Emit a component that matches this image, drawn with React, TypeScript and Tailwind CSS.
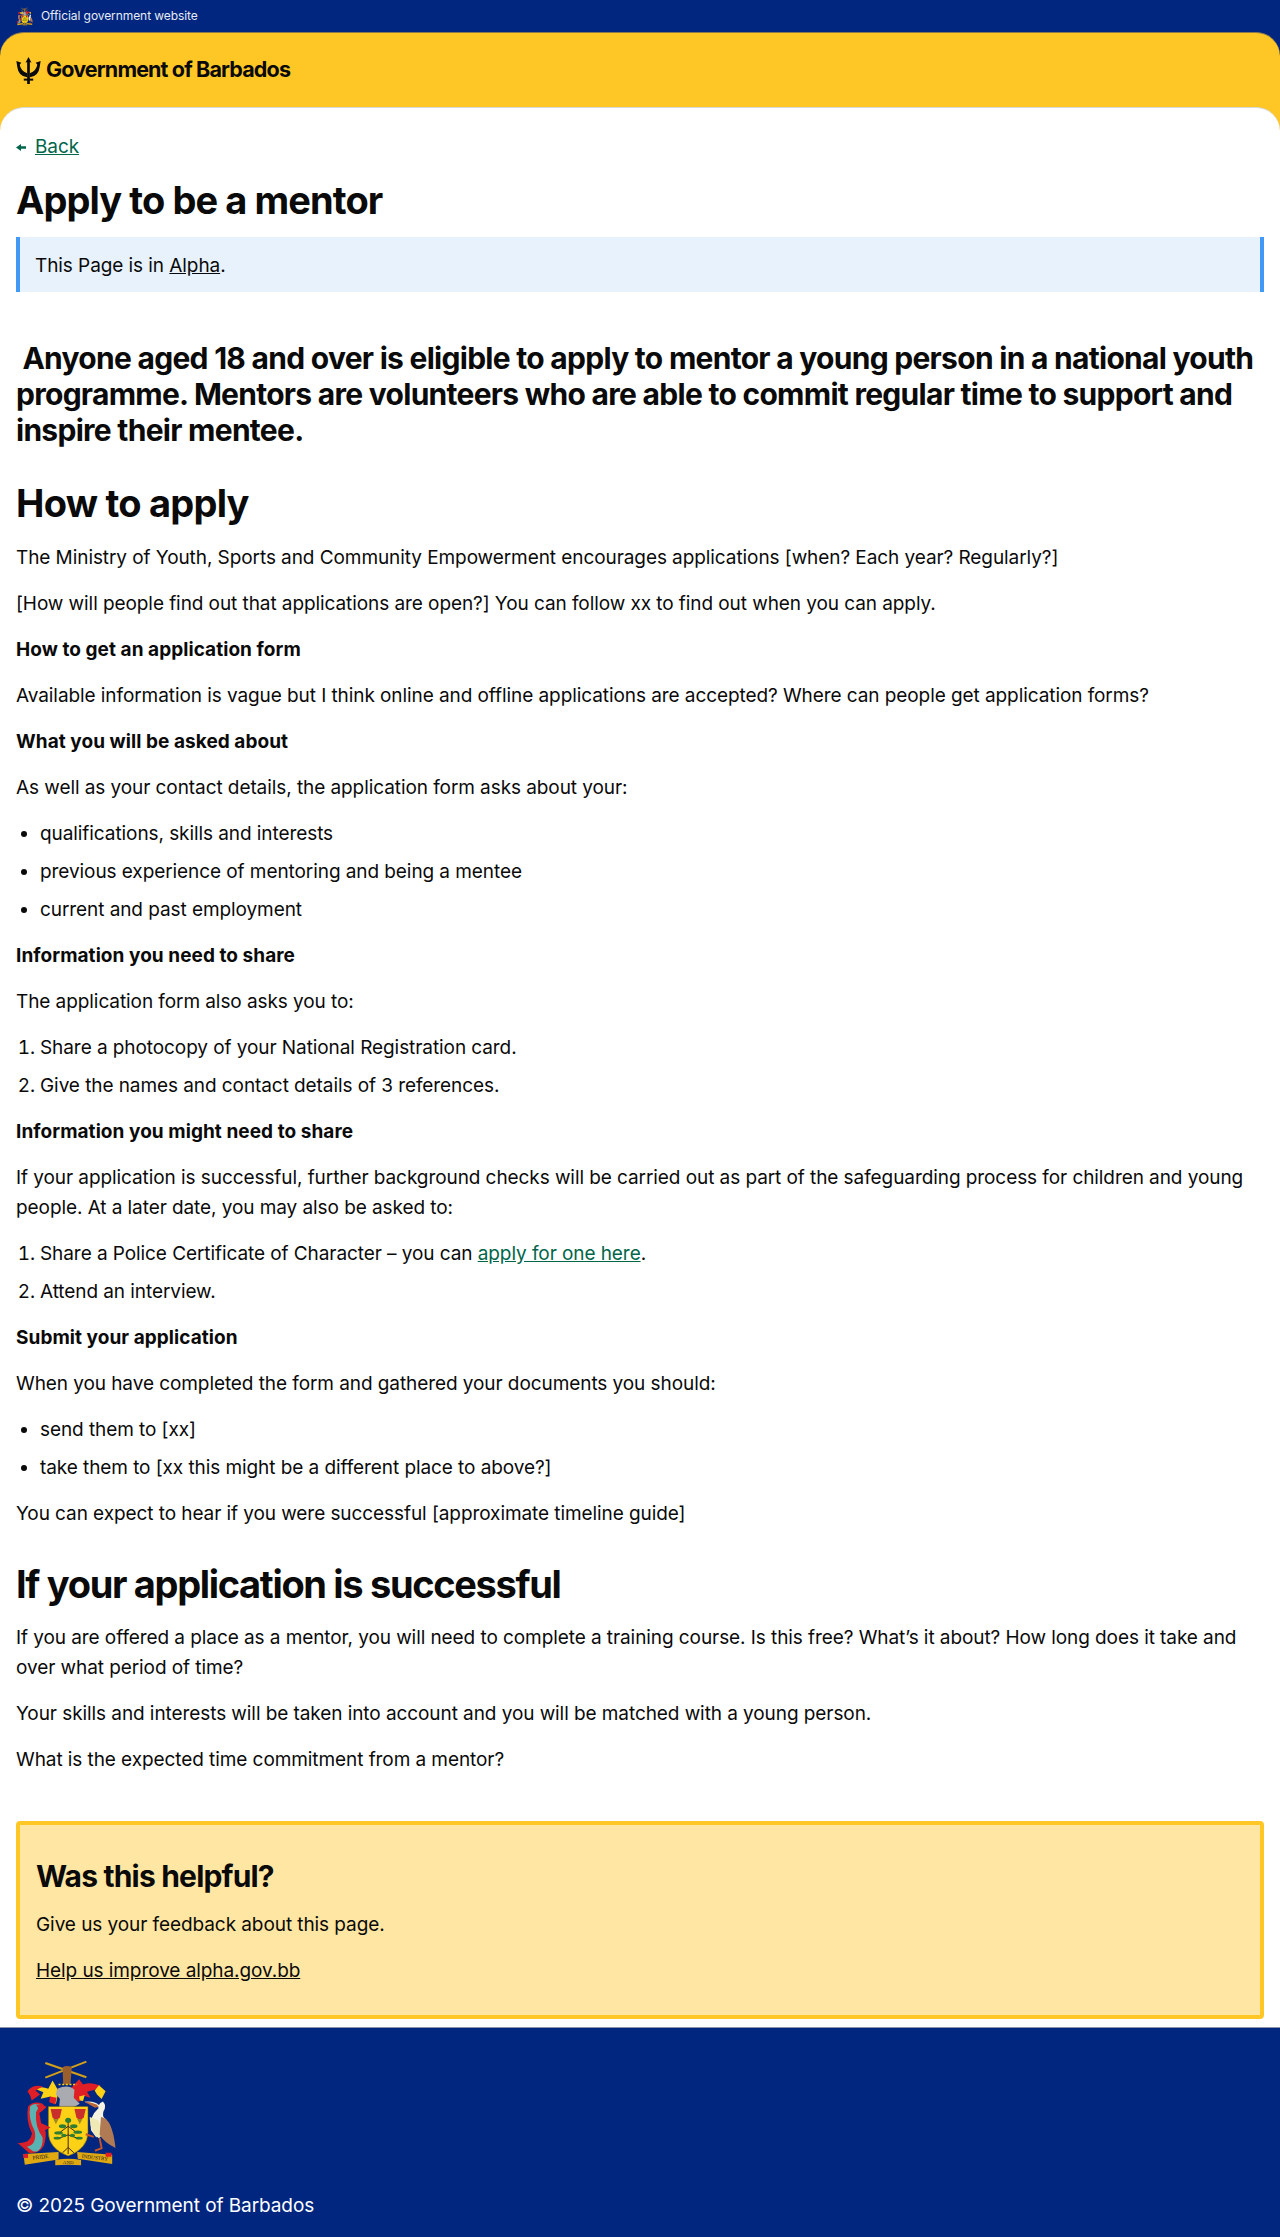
import React from "react";

function Arms({ className }: { className?: string }) {
  return (
    <svg viewBox="48 118 304 320" className={className} aria-label="Coat of arms">
      <path d="M136 127 L260 170 M136 171 L260 123" stroke="#d4a017" strokeWidth="6" fill="none" />
      <path d="M188 140 Q202 132 216 140 L212 192 L190 192 Z" fill="#9a5f2c" />
      <path d="M105 205 Q125 195 145 205 L158 180 L172 205 Q175 225 168 250 L150 245 L152 228 L122 235 L130 215 Z" fill="#fcd116" />
      <path d="M82 212 Q100 190 128 198 L106 210 L120 222 L95 240 Q92 225 82 212 Z M150 228 L170 232 L166 252 L148 245 Z" fill="#e01e25" />
      <path d="M212 205 L238 176 L250 192 Q275 182 302 196 L285 208 L262 214 L272 232 L250 225 L238 245 L222 235 Z" fill="#e01e25" />
      <path d="M285 210 L298 194 L318 212 L306 236 L292 222 Z M238 228 L255 224 L250 242 L240 240 Z" fill="#fcd116" />
      <path d="M172 205 Q205 190 224 208 L222 232 L240 250 Q205 272 178 258 L180 235 L168 222 Z" fill="#a9abb0" />
      <path d="M176 192 H232" stroke="#fcd116" strokeWidth="5" strokeDasharray="6 5" />
      <path d="M145 258 H265 V335 Q265 385 205 408 Q145 385 145 335 Z" fill="#fcd116" stroke="#5b4a1a" strokeWidth="1.5" />
      <path d="M152 266 H186 L180 292 L168 300 L158 292 Z M224 266 H258 L252 292 L240 300 L230 292 Z" fill="#c9302c" />
      <path d="M160 296 L168 312 L176 296 Z M232 296 L240 312 L248 296 Z" fill="#a08a20" />
      <path d="M205 296 V382 M205 382 L188 398 M205 382 L222 398 M205 382 V402 M205 318 L178 338 M205 318 L232 338 M205 344 L172 356 M205 344 L238 356" stroke="#3f2a12" strokeWidth="3" fill="none" />
      <g fill="#2e7d32">
        <ellipse cx="205" cy="300" rx="9" ry="8" />
        <ellipse cx="188" cy="318" rx="11" ry="6" />
        <ellipse cx="222" cy="318" rx="11" ry="6" />
        <ellipse cx="176" cy="338" rx="13" ry="5" />
        <ellipse cx="234" cy="336" rx="13" ry="5" />
        <ellipse cx="172" cy="354" rx="11" ry="4" />
        <ellipse cx="238" cy="354" rx="11" ry="4" />
        <ellipse cx="192" cy="346" rx="8" ry="5" />
        <ellipse cx="218" cy="346" rx="8" ry="5" />
      </g>
      <path d="M84 258 Q100 240 128 250 L138 262 L118 278 L124 312 Q146 330 132 376 Q118 402 86 398 L52 368 Q90 372 96 340 Q76 300 84 258 Z" fill="#d8202a" />
      <path d="M90 258 Q104 246 120 254 L108 276 Q104 320 128 352 Q130 382 112 394 L100 394 L80 380 Q112 372 104 332 Q84 296 90 258 Z" fill="#59b3b3" />
      <path d="M116 305 L152 322 L122 336 Z M108 252 L140 258 L122 276 Z" fill="#d8202a" />
      <path d="M254 244 Q285 240 298 254 Q300 246 310 243 Q322 256 312 272 Q306 288 318 296 L290 352 L274 330 Q266 290 298 262 Z" fill="#f7f3e3" />
      <path d="M254 244 Q280 244 298 258 L286 262 Z" fill="#b8683a" />
      <path d="M270 290 Q272 340 298 354 L312 340 L296 300 Z" fill="#efe9b6" />
      <path d="M304 290 Q338 292 348 384 Q312 366 300 344 Z" fill="#b07a55" />
      <path d="M258 342 L282 350 M300 354 L306 384 L286 392" stroke="#c4552a" strokeWidth="6" fill="none" />
      <path d="M70 402 L176 396 V418 L74 434 Z" fill="#e0a912" />
      <path d="M232 396 L338 404 V432 L234 416 Z" fill="#e0a912" />
      <path d="M166 420 Q205 412 244 420 V436 Q205 432 166 436 Z" fill="#e0a912" />
      <path d="M70 402 h14 v12 h-14 Z M318 398 h18 v12 h-18 Z" fill="#e01e25" />
      <text x="122" y="416" fontSize="17" textAnchor="middle" fill="#222" transform="rotate(-7 122 416)" fontFamily="'Liberation Serif', serif">PRIDE</text>
      <text x="205" y="432" fontSize="15" textAnchor="middle" fill="#222" fontFamily="'Liberation Serif', serif">AND</text>
      <text x="285" y="418" fontSize="16" textAnchor="middle" fill="#222" transform="rotate(7 285 418)" fontFamily="'Liberation Serif', serif">INDUSTRY</text>
    </svg>
  );
}

function Trident({ className }: { className?: string }) {
  return (
    <svg viewBox="0 0 72 80" className={className} fill="#0a0a0a">
      <path d="M36 0 L45 17 L40 15 V80 H32 V15 L27 17 Z" />
      <path d="M0 12 L15 17 L10 22 Q12 40 32 48 V60 Q6 56 3 30 Z" />
      <path d="M72 12 L57 17 L62 22 Q60 40 40 48 V60 Q66 56 69 30 Z" />
      <path d="M22 64 H50 V70 H22 Z" />
    </svg>
  );
}

const P = ({ children }: { children: React.ReactNode }) => <p className="mb-4">{children}</p>;
const S = ({ children }: { children: React.ReactNode }) => <p className="mb-4 font-bold tracking-[0.003em]">{children}</p>;
const Li = ({ children }: { children: React.ReactNode }) => <li className="mb-2">{children}</li>;

export default function App() {
  return (
    <div className="bg-white text-[19px] leading-[30px] text-[#0a0a0a] font-['Inter',sans-serif] tracking-[-0.004em]">
      <div className="bg-[#00267f]">
        <div className="h-8 flex items-center gap-2 pl-4 text-[#e8ebf3] text-[12px] leading-[16px]">
          <Arms className="w-[17px] h-[19px]" />
          <span>Official government website</span>
        </div>
        <header className="bg-[#ffc726] rounded-t-[24px] border-t border-[#8a7a50]">
          <div className="h-[74px] flex items-center gap-[5px] pl-4">
            <Trident className="w-[25px] h-[27px]" />
            <span className="text-[21.5px] font-bold leading-none tracking-[-0.04em]">Government of Barbados</span>
          </div>
          <main className="bg-white rounded-t-[24px] border-t border-[#d8d8d8] px-4 pt-[24px]">
            <a className="flex items-center gap-[9px] text-[#00654a] underline h-[30px]">
              <svg viewBox="0 0 10 7" className="w-[10px] h-[7px]"><path d="M0 3.5 L5 0 V2.3 H10 V4.7 H5 V7 Z" fill="#00654a" /></svg>
              <span>Back</span>
            </a>
            <h1 className="text-[38px] leading-[48px] font-bold mt-[14px] mb-[13px] tracking-[-0.024em]">Apply to be a mentor</h1>
            <div className="bg-[#e8f2fd] border-x-4 border-[#4299f5] h-[55px] pl-[15px] pt-[2px] flex items-center">
              <p>This Page is in <a className="underline">Alpha</a>.</p>
            </div>
            <p className="text-[30px] leading-[36px] font-bold mt-[48px] mb-[31px] tracking-[-0.024em]">&nbsp;Anyone aged 18 and over is eligible to apply to mentor a young person in a national youth programme. Mentors are volunteers who are able to commit regular time to support and inspire their mentee.</p>
            <h2 className="text-[38px] leading-[48px] font-bold mb-4 tracking-[-0.02em]">How to apply</h2>
            <P>The Ministry of Youth, Sports and Community Empowerment encourages applications [when? Each year? Regularly?]</P>
            <P>[How will people find out that applications are open?] You can follow xx to find out when you can apply.</P>
            <S>How to get an application form</S>
            <P>Available information is vague but I think online and offline applications are accepted? Where can people get application forms?</P>
            <S>What you will be asked about</S>
            <P>As well as your contact details, the application form asks about your:</P>
            <ul className="list-disc pl-6 pb-2">
              <Li>qualifications, skills and interests</Li>
              <Li>previous experience of mentoring and being a mentee</Li>
              <Li>current and past employment</Li>
            </ul>
            <S>Information you need to share</S>
            <P>The application form also asks you to:</P>
            <ol className="list-decimal pl-6 pb-2">
              <Li>Share a photocopy of your National Registration card.</Li>
              <Li>Give the names and contact details of 3 references.</Li>
            </ol>
            <S>Information you might need to share</S>
            <P>If your application is successful, further background checks will be carried out as part of the safeguarding process for children and young people. At a later date, you may also be asked to:</P>
            <ol className="list-decimal pl-6 pb-2">
              <Li>Share a Police Certificate of Character – you can <a className="underline text-[#00654a]">apply for one here</a>.</Li>
              <Li>Attend an interview.</Li>
            </ol>
            <S>Submit your application</S>
            <P>When you have completed the form and gathered your documents you should:</P>
            <ul className="list-disc pl-6 pb-2">
              <Li>send them to [xx]</Li>
              <Li>take them to [xx this might be a different place to above?]</Li>
            </ul>
            <P>You can expect to hear if you were successful [approximate timeline guide]</P>
            <h2 className="text-[38px] leading-[48px] font-bold mt-[31px] mb-[15px] tracking-[-0.035em]">If your application is successful</h2>
            <P>If you are offered a place as a mentor, you will need to complete a training course. Is this free? What’s it about? How long does it take and over what period of time?</P>
            <P>Your skills and interests will be taken into account and you will be matched with a young person.</P>
            <P>What is the expected time commitment from a mentor?</P>
            <section className="mt-[46px] mb-2 bg-[#ffe6a3] border-4 border-[#ffc726] rounded-[4px] px-4 pt-[31px] pb-[29px]">
              <h2 className="text-[30px] leading-[40px] font-bold mb-[14px] tracking-[-0.027em]">Was this helpful?</h2>
              <P>Give us your feedback about this page.</P>
              <a className="underline">Help us improve alpha.gov.bb</a>
            </section>
          </main>
        </header>
      </div>
      <footer className="bg-[#00267f] text-white border-t border-[#8a93a8] h-[210px] px-4 pt-[32px]">
        <Arms className="w-[101px] h-[106px]" />
        <p className="mt-[25px]">© 2025 Government of Barbados</p>
      </footer>
    </div>
  );
}
